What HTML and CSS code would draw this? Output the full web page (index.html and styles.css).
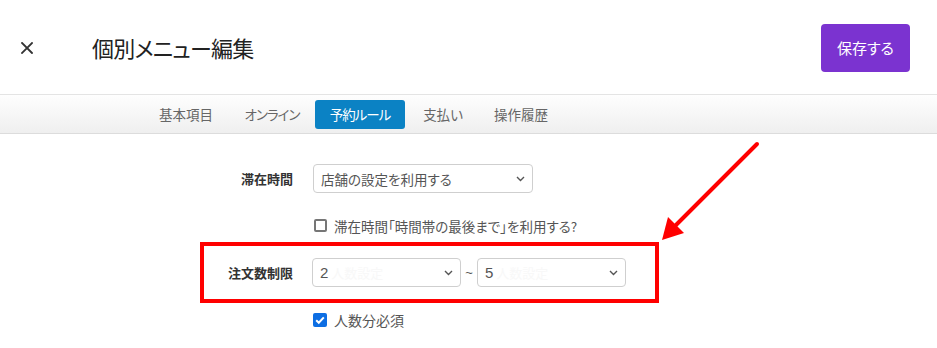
FILE: index.html
```html
<!DOCTYPE html>
<html lang="ja">
<head>
<meta charset="utf-8">
<title>個別メニュー編集</title>
<link rel="stylesheet" href="styles.css">
</head>
<body>
<header class="topbar">
  <button class="close" aria-label="閉じる">
    <svg width="12" height="12" viewBox="0 0 12 12"><path d="M1 1L11 11M11 1L1 11" stroke="#333" stroke-width="1.8" stroke-linecap="square"/></svg>
  </button>
  <h1 class="title">個別メニュー編集</h1>
  <button class="save">保存する</button>
</header>
<nav class="tabs">
  <span class="tab tab-basic">基本項目</span>
  <span class="tab tab-online">オンライン</span>
  <span class="tab tab-rule active">予約ルール</span>
  <span class="tab tab-pay">支払い</span>
  <span class="tab tab-history">操作履歴</span>
</nav>
<main class="form">
  <div class="row">
    <span class="label">滞在時間</span>
    <div class="select wide">
      <span class="value">店舗の設定を利用する</span>
      <svg class="chev" width="9" height="6" viewBox="0 0 9 6"><path d="M1 1L4.5 4.5L8 1" fill="none" stroke="#555" stroke-width="1.4"/></svg>
    </div>
  </div>
  <div class="check-row">
    <span class="box"></span>
    <span class="check-text long">滞在時間「時間帯の最後まで」を利用する?</span>
  </div>
  <div class="row highlight">
    <span class="label">注文数制限</span>
    <div class="select narrow">
      <span class="value num">2<span class="ghost">人数設定</span></span>
      <svg class="chev" width="9" height="6" viewBox="0 0 9 6"><path d="M1 1L4.5 4.5L8 1" fill="none" stroke="#555" stroke-width="1.4"/></svg>
    </div>
    <span class="tilde">~</span>
    <div class="select narrow">
      <span class="value num">5<span class="ghost">人数設定</span></span>
      <svg class="chev" width="9" height="6" viewBox="0 0 9 6"><path d="M1 1L4.5 4.5L8 1" fill="none" stroke="#555" stroke-width="1.4"/></svg>
    </div>
  </div>
  <div class="check-row">
    <span class="box checked">
      <svg width="14" height="14" viewBox="0 0 14 14"><path d="M3.2 7.2L5.8 9.8L10.8 4.4" fill="none" stroke="#fff" stroke-width="2"/></svg>
    </span>
    <span class="check-text">人数分必須</span>
  </div>
</main>
<svg class="arrow" width="937" height="348" viewBox="0 0 937 348">
  <line x1="757" y1="144" x2="672" y2="229" stroke="#ff0000" stroke-width="4" stroke-linecap="round"/>
  <polygon points="662,240 668,217 684,233" fill="#ff0000"/>
</svg>
</body>
</html>
```
FILE: styles.css
```css
* { box-sizing: border-box; }
html, body { margin: 0; padding: 0; background: #fff; }
body {
  font-family: "Noto Sans CJK JP", "Noto Sans", sans-serif;
  color: #333;
  font-feature-settings: "palt";
  position: relative;
  width: 937px;
  height: 348px;
  overflow: hidden;
}
.topbar {
  height: 95px;
  border-bottom: 1px solid #e4e4e4;
  display: flex;
  align-items: center;
  padding: 0 27px 0 21px;
}
.close {
  border: 0;
  background: none;
  padding: 0;
  width: 12px;
  height: 12px;
  display: flex;
  margin-top: 1px;
}
.title {
  margin: 0 0 0 59px;
  font-size: 22px;
  letter-spacing: -0.8px;
  font-weight: 400;
  color: #222;
  flex: 1;
  line-height: 1;
}
.save {
  width: 89px;
  height: 48px;
  border: 0;
  border-radius: 4px;
  background: #7b33d0;
  color: #fff;
  font-family: inherit;
  font-feature-settings: "palt";
  font-size: 15px;
  padding: 0;
  margin-top: 1px;
}
.tabs {
  height: 39px;
  border-bottom: 1px solid #dcdcdc;
  background: linear-gradient(#fefefe, #efefef);
  display: flex;
  align-items: center;
  padding-left: 143px;
}
.tab {
  font-size: 13.5px;
  color: #666;
  height: 29px;
  line-height: 29px;
  text-align: center;
  white-space: nowrap;
}
.tab-basic { width: 86px; }
.tab-online { width: 86px; letter-spacing: -1px; }
.tab-rule { width: 90px; letter-spacing: -1px; }
.tab-pay { width: 76px; }
.tab-history { width: 80px; }
.tab.active {
  background: #0b82c4;
  color: #fff;
  border-radius: 3px;
}
.form {
  padding: 14px 0 0 200px;
}
.row {
  width: 459px;
  height: 61px;
  border: 4px solid transparent;
  display: flex;
  align-items: center;
}
.row.highlight { border-color: #ff0000; }
.label {
  width: 89px;
  margin-right: 20px;
  text-align: right;
  font-size: 13px;
  font-weight: 700;
  color: #333;
}
.select {
  height: 29px;
  border: 1px solid #cfcfcf;
  border-radius: 4px;
  display: flex;
  align-items: center;
  justify-content: space-between;
  padding: 0 7px 0 7px;
  font-size: 13.5px;
  color: #555;
  background: #fff;
}
.select.wide { width: 220px; }
.select.narrow { width: 149px; }
.row.highlight .select.narrow:first-of-type { margin-left: -1px; }
.value.num { font-family: "Liberation Sans", "Noto Sans CJK JP", sans-serif; font-size: 15px; }
.ghost {
  font-family: "Noto Sans CJK JP", sans-serif;
  color: #f8f8f8;
  font-size: 13px;
  margin-left: 3px;
}
.tilde {
  font-family: "Liberation Sans", sans-serif;
  font-size: 13px;
  color: #555;
  width: 16px;
  text-align: center;
}
.check-row {
  height: 33px;
  display: flex;
  align-items: center;
  padding-left: 114px;
}
.box {
  width: 13px;
  height: 13px;
  border: 2px solid #767676;
  border-radius: 2px;
  margin-right: 7px;
  display: flex;
  align-items: center;
  justify-content: center;
}
.box.checked {
  width: 14px;
  height: 14px;
  border: 0;
  background: #0d6ee3;
  margin-left: -1px;
}
.check-text {
  font-size: 14px;
  color: #555;
}
.check-text.long { font-size: 13.5px; }
.arrow {
  position: absolute;
  left: 0;
  top: 0;
  pointer-events: none;
}
```
